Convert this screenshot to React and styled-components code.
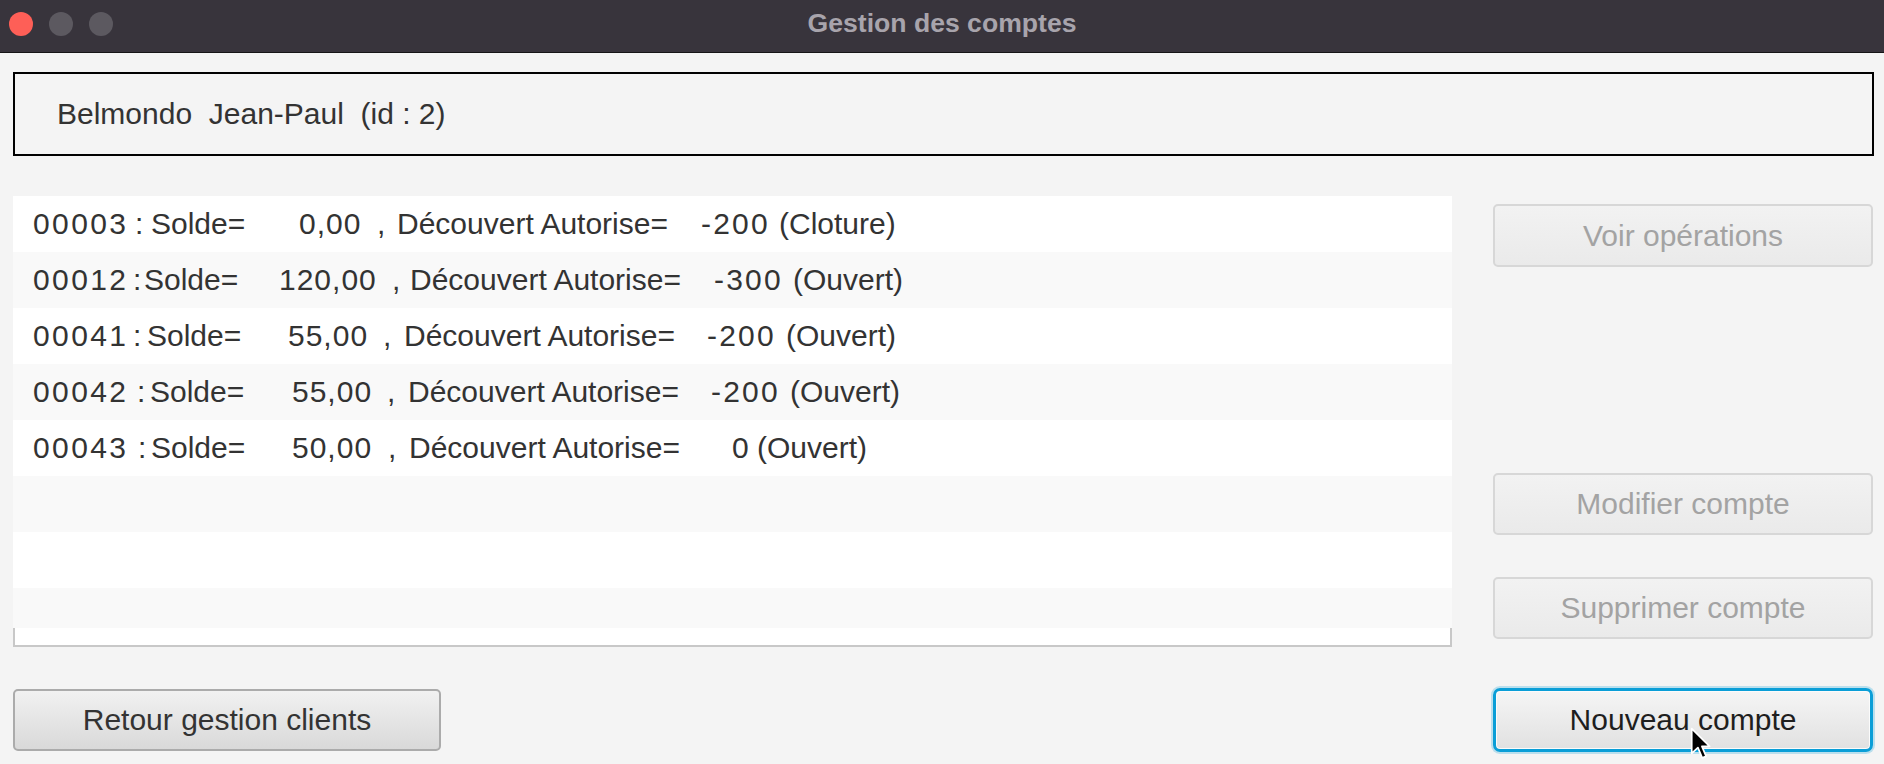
import React from "react";
import styled, { createGlobalStyle, css } from "styled-components";

const GlobalStyle = createGlobalStyle`
  html, body { margin: 0; padding: 0; background: #f4f4f4; }
  body { font-family: "Liberation Sans", Arial, sans-serif; }
  * { box-sizing: border-box; }
`;

const Window = styled.div`
  width: 1884px;
  height: 764px;
  overflow: hidden;
  background: #f4f4f4;
  display: flex;
  flex-direction: column;
`;

const TitleBar = styled.div`
  height: 53px;
  flex: none;
  background: #38343c;
  border-bottom: 1px solid #161517;
  display: grid;
  grid-template-columns: 1fr auto 1fr;
  align-items: center;
  padding-bottom: 5px;
`;

const Lights = styled.div`
  display: flex;
  gap: 16px;
  padding-left: 9px;
`;

const Light = styled.span`
  width: 24px;
  height: 24px;
  border-radius: 50%;
  background: ${(p) => (p.$red ? "#fe5f57" : "#5c5960")};
`;

const Title = styled.div`
  font-family: "Liberation Sans", Arial, sans-serif;
  font-weight: bold;
  font-size: 26.6px;
  color: #a8a4ac;
`;

const Content = styled.div`
  flex: 1;
  padding: 19px 10px 0 13px;
  display: flex;
  flex-direction: column;
`;

const HeaderBox = styled.div`
  height: 84px;
  border: 2px solid #000;
  padding-left: 42px;
  display: flex;
  align-items: center;
  font-size: 30px;
  color: #333;
  white-space: pre;
`;

const MainGrid = styled.div`
  margin-top: 40px;
  display: grid;
  grid-template-columns: 1439px 380px;
  column-gap: 41px;
  row-gap: 41px;
  align-items: start;
`;

const ListView = styled.div`
  display: flex;
  flex-direction: column;
`;

const Rows = styled.div`
  height: 432px;
  overflow: hidden;
  display: flex;
  flex-direction: column;
`;

const Row = styled.div`
  height: 56px;
  flex: none;
  display: flex;
  align-items: center;
  padding-left: 20px;
  background: ${(p) => (p.$odd ? "#f9f9f9" : "#ffffff")};
  font-size: 30px;
  color: #333;
  white-space: pre;
`;

const Cell = styled.span`
  flex: none;
  width: ${(p) => (p.$w ? `${p.$w}px` : "auto")};
  letter-spacing: ${(p) => p.$ls || 0}px;
`;

const ListFooter = styled.div`
  height: 19px;
  background: #fff;
  border: 2px solid #c8c8c8;
  border-top: none;
`;

const ButtonColumn = styled.div`
  display: flex;
  flex-direction: column;
  padding-top: 8px;
`;

const Button = styled.button`
  font-family: "Liberation Sans", Arial, sans-serif;
  font-size: 30px;
  height: ${(p) => p.$h || 63}px;
  width: ${(p) => p.$w || 380}px;
  margin: ${(p) => p.$mt || 0}px 0 0 0;
  padding: 0;
  border-radius: 5px;
  display: flex;
  align-items: center;
  justify-content: center;
  cursor: default;
  ${(p) =>
    p.$variant === "disabled" &&
    css`
      border: 2px solid #d7d7d7;
      background: linear-gradient(#f2f2f2, #eaeaea);
      color: #a3a3a3;
    `}
  ${(p) =>
    p.$variant === "default" &&
    css`
      border: 2px solid #ababab;
      background: linear-gradient(#f1f1f1, #d9d9d9);
      color: #333;
    `}
  ${(p) =>
    p.$variant === "focused" &&
    css`
      border: 3px solid #0a9ed7;
      border-radius: 7px;
      background: linear-gradient(#f5f5f5, #e1e1e1);
      color: #1e1e1e;
      box-shadow: 0 0 0 2px rgba(10, 158, 215, 0.25),
        inset 0 0 0 1px #fbfbfb;
    `}
`;

const ButtonWrap = styled.div`
  position: relative;
  width: 380px;
`;

const Cursor = styled.svg`
  position: absolute;
  left: 197px;
  top: 39px;
  width: 22px;
  height: 34px;
  pointer-events: none;
`;

const accounts = [
  { id: "00003", amount: "0,00", od: "-200", st: "(Cloture)", x: [33, 135, 151, 299, 377, 397, 701, 779] },
  { id: "00012", amount: "120,00", od: "-300", st: "(Ouvert)", x: [33, 133, 144, 279, 392, 410, 714, 793] },
  { id: "00041", amount: "55,00", od: "-200", st: "(Ouvert)", x: [33, 133, 147, 288, 383, 404, 707, 786] },
  { id: "00042", amount: "55,00", od: "-200", st: "(Ouvert)", x: [33, 137, 150, 292, 387, 408, 711, 790] },
  { id: "00043", amount: "50,00", od: "0", st: "(Ouvert)", x: [33, 138, 151, 292, 388, 409, 732, 757] },
];

function AccountRow({ a, odd }) {
  const w = a.x.slice(1).map((v, i) => v - a.x[i]);
  return (
    <Row $odd={odd}>
      <Cell $w={w[0]} $ls={2.4}>{a.id}</Cell>
      <Cell $w={w[1]}>:</Cell>
      <Cell $w={w[2]}>Solde=</Cell>
      <Cell $w={w[3]} $ls={1}>{a.amount}</Cell>
      <Cell $w={w[4]}>,</Cell>
      <Cell $w={w[5]}>Découvert Autorise=</Cell>
      <Cell $w={w[6]} $ls={2.2}>{a.od}</Cell>
      <Cell>{a.st}</Cell>
    </Row>
  );
}

export default function App() {
  const empty = [5, 6, 7];
  return (
    <>
      <GlobalStyle />
      <Window>
        <TitleBar>
          <Lights>
            <Light $red />
            <Light />
            <Light />
          </Lights>
          <Title>Gestion des comptes</Title>
          <div />
        </TitleBar>
        <Content>
          <HeaderBox>Belmondo  Jean-Paul  (id : 2)</HeaderBox>
          <MainGrid>
            <ListView>
              <Rows>
                {accounts.map((a, i) => (
                  <AccountRow key={a.id} a={a} odd={i % 2 === 1} />
                ))}
                {empty.map((i) => (
                  <Row key={i} $odd={i % 2 === 1} />
                ))}
              </Rows>
              <ListFooter />
            </ListView>
            <ButtonColumn>
              <Button $variant="disabled">Voir opérations</Button>
              <Button $variant="disabled" $mt={206} $h={62}>
                Modifier compte
              </Button>
              <Button $variant="disabled" $mt={42} $h={62}>
                Supprimer compte
              </Button>
            </ButtonColumn>
            <Button $variant="default" $w={428} $h={62} $mt={1}>
              Retour gestion clients
            </Button>
            <ButtonWrap>
              <Button $variant="focused" $h={64}>
                Nouveau compte
              </Button>
              <Cursor viewBox="0 0 14 22">
                <path
                  d="M1 1 L1 17 L5 13.3 L7.8 20 L10.3 19 L7.6 12.5 L12.6 12.5 Z"
                  fill="#000"
                  stroke="#fff"
                  strokeWidth="1.1"
                  strokeLinejoin="round"
                />
              </Cursor>
            </ButtonWrap>
          </MainGrid>
        </Content>
      </Window>
    </>
  );
}
